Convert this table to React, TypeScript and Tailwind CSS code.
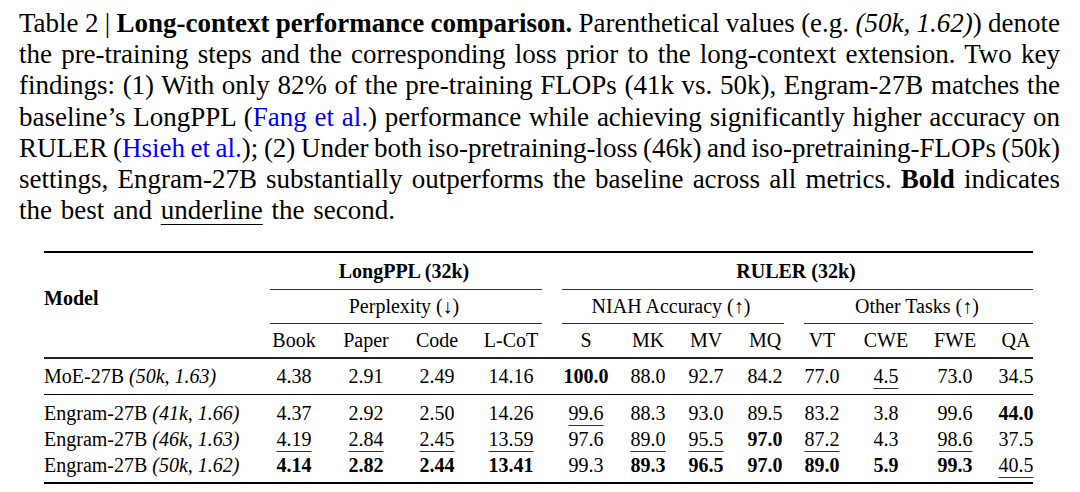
const cols = "grid grid-cols-[72px_72px_70px_78px_72px_52px_64px_54px_60px_68px_70px_52px]"
const just = "text-justify [text-align-last:justify] [word-spacing:-8px]"

type Cell = { v: string; b?: boolean; u?: boolean }

const rows: { name: string; note: string; cells: Cell[] }[] = [
    {
        name: "Engram-27B",
        note: "(41k, 1.66)",
        cells: [
            { v: "4.37" }, { v: "2.92" }, { v: "2.50" }, { v: "14.26" },
            { v: "99.6", u: true }, { v: "88.3" }, { v: "93.0" }, { v: "89.5" },
            { v: "83.2" }, { v: "3.8" }, { v: "99.6" }, { v: "44.0", b: true },
        ],
    },
    {
        name: "Engram-27B",
        note: "(46k, 1.63)",
        cells: [
            { v: "4.19", u: true }, { v: "2.84", u: true }, { v: "2.45", u: true }, { v: "13.59", u: true },
            { v: "97.6" }, { v: "89.0", u: true }, { v: "95.5", u: true }, { v: "97.0", b: true },
            { v: "87.2", u: true }, { v: "4.3" }, { v: "98.6", u: true }, { v: "37.5" },
        ],
    },
    {
        name: "Engram-27B",
        note: "(50k, 1.62)",
        cells: [
            { v: "4.14", b: true }, { v: "2.82", b: true }, { v: "2.44", b: true }, { v: "13.41", b: true },
            { v: "99.3" }, { v: "89.3", b: true }, { v: "96.5", b: true }, { v: "97.0", b: true },
            { v: "89.0", b: true }, { v: "5.9", b: true }, { v: "99.3", b: true }, { v: "40.5", u: true },
        ],
    },
]

const baseline: Cell[] = [
    { v: "4.38" }, { v: "2.91" }, { v: "2.49" }, { v: "14.16" },
    { v: "100.0", b: true }, { v: "88.0" }, { v: "92.7" }, { v: "84.2" },
    { v: "77.0" }, { v: "4.5", u: true }, { v: "73.0" }, { v: "34.5" },
]

function Value({ cell }: { cell: Cell }) {
    return (
        <div className="text-center">
            <span
                className={
                    (cell.b ? "font-bold " : "") +
                    (cell.u ? "underline decoration-1 underline-offset-[5px] decoration-[#333]" : "")
                }
            >
                {cell.v}
            </span>
        </div>
    )
}

function DataRow({ name, note, cells, lead }: { name: string; note: string; cells: Cell[]; lead: string }) {
    return (
        <div className={"flex " + lead}>
            <div className="w-[214px] shrink-0">
                {name} <i>{note}</i>
            </div>
            <div className={cols}>
                {cells.map((c, i) => (
                    <Value key={i} cell={c} />
                ))}
            </div>
        </div>
    )
}

export default function App() {
    return (
        <div className="w-[1080px] h-[492px] bg-white text-black font-['Liberation_Serif',serif] overflow-hidden">
            {/* Caption */}
            <div className="pt-[8px] pl-[19px] w-[1060px] text-[27px] leading-[31.2px]">
                <div className={just}>
                    Table 2 | <b>Long-context performance comparison.</b> Parenthetical values (e.g. <i>(50k, 1.62)</i>) denote
                </div>
                <div className={just}>
                    the pre-training steps and the corresponding loss prior to the long-context extension. Two key
                </div>
                <div className={just}>
                    findings: (1) With only 82% of the pre-training FLOPs (41k vs. 50k), Engram-27B matches the
                </div>
                <div className={just}>
                    baseline’s LongPPL (<span className="text-[#0000ff]">Fang et al.</span>) performance while achieving significantly higher accuracy on
                </div>
                <div className={just}>
                    RULER (<span className="text-[#0000ff]">Hsieh et al.</span>); (2) Under both iso-pretraining-loss (46k) and iso-pretraining-FLOPs (50k)
                </div>
                <div className={just}>
                    settings, Engram-27B substantially outperforms the baseline across all metrics. <b>Bold</b> indicates
                </div>
                <div className="[word-spacing:2px]">
                    the best and <span className="underline decoration-1 underline-offset-[5px]">underline</span> the second.
                </div>
            </div>

            {/* Table */}
            <div className="ml-[44px] mt-[24.6px] w-[989px] text-[20px]">
                <div className="h-[2px] bg-black" />
                <div className="flex">
                    <div className="w-[214px] shrink-0 pt-[27px] leading-[36px] font-bold">Model</div>
                    <div className="flex flex-col">
                        <div className="flex h-[36px] leading-[36px] font-bold">
                            <div className="w-[292px] text-center">LongPPL (32k)</div>
                            <div className="w-[492px] text-center">RULER (32k)</div>
                        </div>
                        <div className="flex h-px">
                            <div className="ml-[12px] w-[272px] bg-[#333]" />
                            <div className="ml-[20px] w-[471px] bg-[#333]" />
                        </div>
                        <div className="flex h-[33px] leading-[33px]">
                            <div className="w-[292px] text-center">Perplexity (↓)</div>
                            <div className="w-[242px] text-center">NIAH Accuracy (↑)</div>
                            <div className="w-[250px] text-center">Other Tasks (↑)</div>
                        </div>
                        <div className="flex h-px">
                            <div className="ml-[12px] w-[272px] bg-[#333]" />
                            <div className="ml-[20px] w-[222px] bg-[#333]" />
                            <div className="ml-[20px] w-[229px] bg-[#333]" />
                        </div>
                        <div className={cols + " h-[33px] leading-[33px]"}>
                            {["Book", "Paper", "Code", "L-CoT", "S", "MK", "MV", "MQ", "VT", "CWE", "FWE", "QA"].map((h) => (
                                <div key={h} className="text-center">
                                    {h}
                                </div>
                            ))}
                        </div>
                    </div>
                </div>
                <div className="h-[2px] bg-[#222]" />
                <DataRow name="MoE-27B" note="(50k, 1.63)" cells={baseline} lead="h-[35px] leading-[34px]" />
                <div className="h-px bg-black" />
                <div className="pt-[5px] pb-[4px]">
                    {rows.map((r) => (
                        <DataRow key={r.note} name={r.name} note={r.note} cells={r.cells} lead="h-[26px] leading-[26px]" />
                    ))}
                </div>
                <div className="h-[2px] bg-black" />
            </div>
        </div>
    )
}
